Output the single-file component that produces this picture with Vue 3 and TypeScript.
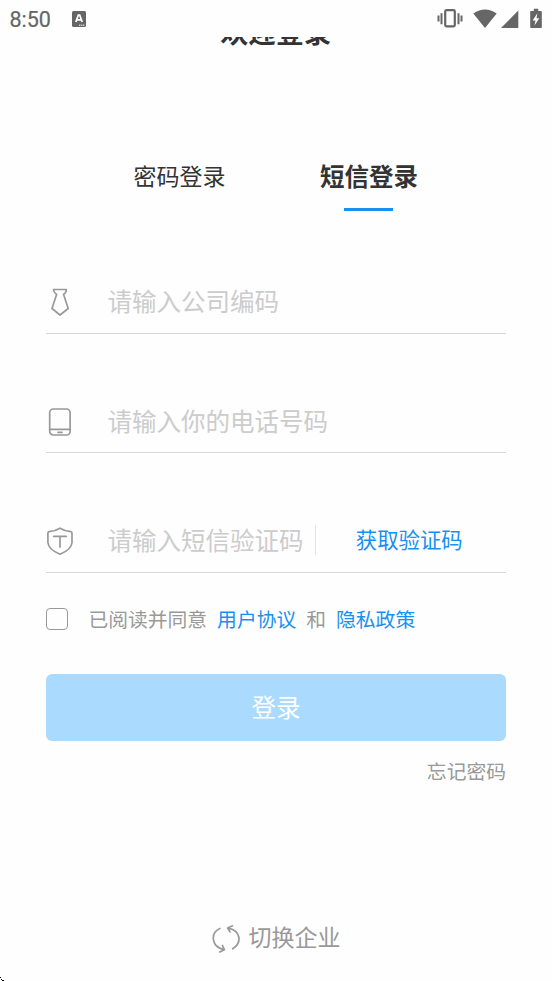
<script setup lang="ts">
import { ref } from 'vue'

type LoginMode = 'password' | 'sms'

const mode = ref<LoginMode>('sms')
const company = ref('')
const phone = ref('')
const code = ref('')
const agreed = ref(false)
</script>

<template>
  <div class="screen">
    <header class="status">
      <span class="clock">8:50</span>
      <svg class="badge" width="14" height="16" viewBox="0 0 14 16">
        <rect width="14" height="16" rx="1.5" fill="#666" />
        <path d="M3.8 11 6.3 4.2h1.4L10.2 11M4.9 8.8h4.2" fill="none" stroke="#fff" stroke-width="1.7" />
        <path d="M7 14.2h6" stroke="#fff" stroke-width="1" stroke-dasharray="1.4 .6" />
      </svg>
      <div class="indicators">
        <svg width="106" height="22" viewBox="0 0 106 22" fill="#666">
          <rect x="7.2" y="2.2" width="9.6" height="16.2" rx="1.3" fill="none" stroke="#666" stroke-width="2.2" />
          <path d="M-.5 7.500h2v6h-2zM2.500 5.200h2v11h-2zM19.500 5.200h2v11h-2zM22.500 7.500h2v6h-2z" />
          <path d="M35.3 5.4Q47 -2.6 58.700 5.4L47 20z" />
          <path d="M80.3 2.5V20H63z" />
          <path d="M93 3h2.8V.8h4.4V3h2.8q.8 0 .8.8v15.4q0 .8-.8.8H93q-.8 0-.8-.8V3.800q0-.8.8-.8z" />
          <path d="M99.400 5.200 94.600 12.600h2.900l-1 5 4.800-7.300h-2.800z" fill="#fff" />
        </svg>
      </div>
    </header>

    <div class="heading"><h1>欢迎登录</h1></div>

    <nav class="tabs">
      <button class="tab" :class="{ active: mode === 'password' }" @click="mode = 'password'">密码登录</button>
      <button class="tab" :class="{ active: mode === 'sms' }" @click="mode = 'sms'">短信登录</button>
    </nav>

    <form class="form" @submit.prevent>
      <label class="field">
        <svg class="icon" width="28" height="30" viewBox="0 0 28 30">
          <path d="M7.500 2.500h12.800q.4 2.500-2.700 5l4.600 14L14 28 6 21.500 10.600 7.500Q7.500 5 7.500 2.500z" />
        </svg>
        <input v-model="company" placeholder="请输入公司编码" />
      </label>
      <label class="field">
        <svg class="icon" width="28" height="30" viewBox="0 0 28 30">
          <rect x="3.700" y="2" width="20.400" height="26" rx="3.600" />
          <path d="M3.700 22.300h20.400M12 25.300h4" />
        </svg>
        <input v-model="phone" placeholder="请输入你的电话号码" />
      </label>
      <label class="field">
        <svg class="icon" width="28" height="30" viewBox="0 0 28 30">
          <path d="M14 2.200Q19 5.200 24.800 5.700 26 5.900 26 7V16.500Q25.500 23.500 14 28.300 2.500 23.500 1.900 16.500V7Q1.900 5.900 3.100 5.700 9 5.200 14 2.200z" />
          <path d="M7.700 10.300h12.600M14 10.300v10.800" />
        </svg>
        <input v-model="code" class="short" placeholder="请输入短信验证码" />
        <span class="divider"></span>
        <button type="button" class="send">获取验证码</button>
      </label>

      <div class="agreement">
        <input v-model="agreed" type="checkbox" />
        <span class="read">已阅读并同意</span>
        <a>用户协议</a>
        <span>和</span>
        <a>隐私政策</a>
      </div>

      <button class="submit">登录</button>
      <a class="forgot">忘记密码</a>
    </form>

    <footer class="switch">
      <svg width="30" height="30" viewBox="0 0 30 30">
        <path d="M8.800 4.500C-.6 9-.2 22.500 13 25.700M11.500 21.500l1.800 4.200-4.500 2.200M21.700 24.800C31.500 18.500 29.800 6.500 16.700 4M21.500 1.800 16.700 4l2.300 3.900" />
      </svg>
      <span>切换企业</span>
    </footer>

    <svg class="cursor" width="4" height="4" viewBox="0 0 4 4" shape-rendering="crispEdges">
      <path d="M0 0h1v1H0zM1 2h1v1H1zM2 3h2v1H2z" />
    </svg>
  </div>
</template>

<style>
body {
  margin: 0;
  background: #fff;
}
</style>

<style scoped>
.screen {
  position: relative;
  width: 552px;
  height: 981px;
  overflow: hidden;
  background: #fefefe;
  color: #999;
  font-family: 'Noto Sans CJK SC', sans-serif;
}
button,
input {
  margin: 0;
  padding: 0;
  border: 0;
  background: none;
  font-family: inherit;
  color: inherit;
}
.status {
  display: flex;
  align-items: center;
  box-sizing: border-box;
  height: 37px;
  padding: 0 9px 0 9.500px;
}
.clock {
  width: 62.500px;
  padding-top: 2px;
  font: 400 21.500px/30px Roboto, sans-serif;
  color: #666;
  -webkit-text-stroke: 0.2px #666;
}
.indicators {
  display: flex;
  margin-left: auto;
  margin-right: -1px;
}
.indicators svg {
  overflow: visible;
}
.heading {
  height: 120px;
  overflow: hidden;
}
h1 {
  margin: -26px 0 0;
  font-size: 27.700px;
  line-height: 40px;
  font-weight: 700;
  text-align: center;
  color: #333;
}
.tabs {
  display: flex;
  gap: 94.500px;
  height: 55px;
  padding-left: 133.500px;
}
.tab {
  display: flex;
  flex-direction: column;
  align-items: center;
  font-size: 23px;
  line-height: 37px;
  color: #333;
}
.tab.active {
  font-size: 24.500px;
  line-height: 38px;
  font-weight: 700;
}
.tab.active::after {
  content: '';
  width: 49px;
  height: 3px;
  margin: 13px 2px 0 0;
  background: #1890f0;
}
.form {
  display: flex;
  flex-direction: column;
  padding: 2px 46px 0;
}
.field {
  display: flex;
  align-items: center;
  box-sizing: border-box;
  height: 63.500px;
  margin-bottom: 56px;
  border-bottom: 1px solid #d6d6d6;
}
.field:first-child {
  margin-top: 56px;
}
.icon,
.switch svg {
  flex: none;
  fill: none;
  stroke: #999;
  stroke-width: 1.700px;
  stroke-linejoin: round;
  stroke-linecap: round;
}
.icon {
  margin-top: 2px;
}
.field input {
  flex: 1;
  min-width: 0;
  height: 40px;
  margin-left: 33.500px;
  margin-bottom: 1px;
  font-size: 24.500px;
  outline: none;
  color: #333;
}
.field .short {
  flex: none;
  width: 207px;
}
.field input::placeholder {
  color: #ccc;
  opacity: 1;
}
.divider {
  width: 1px;
  height: 30px;
  background: #e5e5e5;
}
.send {
  flex: 1;
  padding: 0 3px 2px 0;
  font-size: 21.400px;
  line-height: 32px;
  color: #1890f0;
}
.agreement {
  display: flex;
  align-items: center;
  gap: 10px;
  height: 30px;
  margin-top: -25px;
  font-size: 19.800px;
  white-space: nowrap;
}
.agreement input {
  appearance: none;
  box-sizing: border-box;
  width: 22px;
  height: 22px;
  border: 1.500px solid #999;
  border-radius: 4px;
}
.read {
  margin-left: 10.400px;
}
.agreement a {
  color: #1890f0;
}
.submit {
  height: 67px;
  margin-top: 40px;
  padding-bottom: 2px;
  border-radius: 6px;
  background: #aadbff;
  color: #fff;
  font-size: 24.500px;
}
.forgot {
  align-self: flex-end;
  margin-top: 15px;
  font-size: 19.800px;
  line-height: 30px;
}
.switch {
  display: flex;
  justify-content: center;
  align-items: center;
  gap: 8px;
  height: 40px;
  margin-top: 132px;
  padding-right: 1px;
  font-size: 23px;
}
.switch svg {
  margin-top: 2px;
}
.switch span {
  margin-bottom: 4px;
}
.cursor {
  position: absolute;
  left: 0;
  bottom: 0;
}
</style>
